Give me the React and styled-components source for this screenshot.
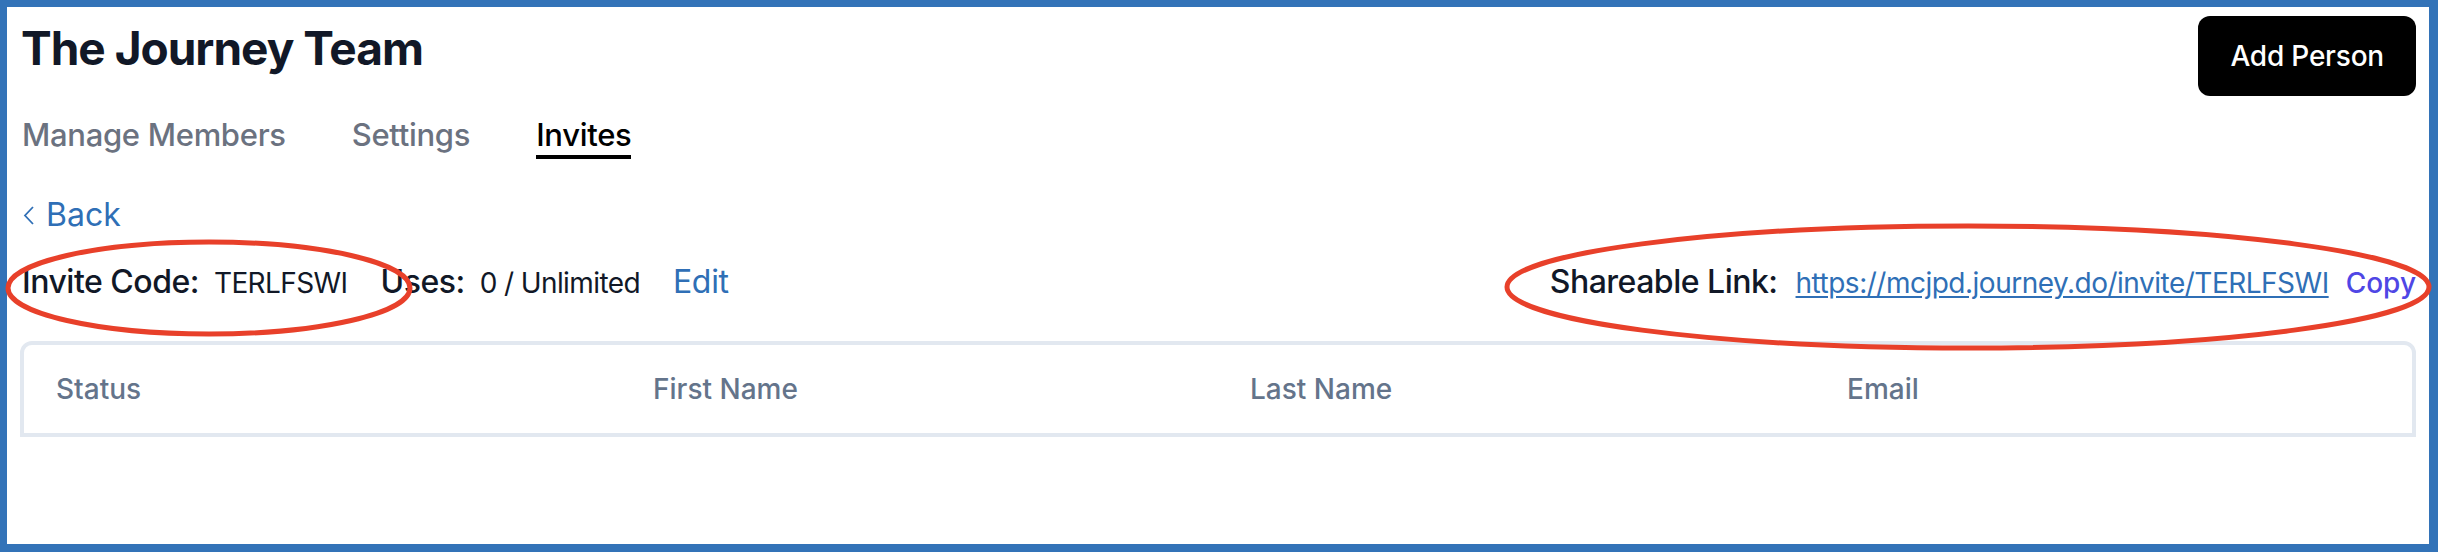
import React from "react";
import styled, { createGlobalStyle } from "styled-components";

const GlobalStyle = createGlobalStyle`
  html, body {
    margin: 0;
    padding: 0;
    background: #ffffff;
  }
  body {
    font-family: Inter, "Noto Sans", "Liberation Sans", sans-serif;
  }
`;

const Screen = styled.div`
  position: relative;
  width: 2438px;
  height: 552px;
`;

const Frame = styled.div`
  box-sizing: border-box;
  width: 100%;
  height: 100%;
  background: #ffffff;
  border-style: solid;
  border-color: #3373b8;
  border-width: 7px 9px 8px 7px;
  padding: 9px 13px 0 13px;
`;

const Header = styled.header`
  display: flex;
  justify-content: space-between;
  align-items: flex-start;
`;

const Title = styled.h1`
  margin: 0;
  padding-left: 1px;
  font-size: 46px;
  line-height: 64px;
  font-weight: 700;
  color: #111827;
  letter-spacing: -1px;
`;

const AddButton = styled.button`
  height: 80px;
  padding: 0 32px;
  border: none;
  border-radius: 12px;
  background: #000000;
  color: #ffffff;
  font-family: inherit;
  font-size: 28px;
  font-weight: 500;
  letter-spacing: -0.2px;
`;

const Tabs = styled.nav`
  display: flex;
  gap: 66px;
  margin-top: 19px;
  padding-left: 2px;
`;

const Tab = styled.span`
  font-size: 31px;
  line-height: 40px;
  font-weight: 500;
  letter-spacing: -0.3px;
  color: ${(p) => (p.$active ? "#000000" : "#6b7280")};
  border-bottom: 4px solid ${(p) => (p.$active ? "#000000" : "transparent")};
`;

const BackLink = styled.a`
  display: inline-flex;
  align-items: center;
  gap: 12px;
  margin-top: 32px;
  padding-left: 3px;
  font-size: 32px;
  line-height: 48px;
  color: #2f6fb6;
  text-decoration: none;
`;

const InviteRow = styled.div`
  display: flex;
  justify-content: space-between;
  align-items: baseline;
  margin-top: 19px;
  line-height: 48px;
`;

const Group = styled.div`
  display: flex;
  align-items: baseline;
`;

const Label = styled.span`
  font-size: 32px;
  font-weight: 500;
  letter-spacing: -0.5px;
  color: #111827;
  padding-left: ${(p) => (p.$first ? "2px" : "0")};
`;

const Value = styled.span`
  margin-left: 15px;
  margin-right: 33px;
  font-size: 28px;
  letter-spacing: -0.6px;
  color: #111827;
`;

const EditLink = styled.a`
  font-size: 32px;
  letter-spacing: -0.3px;
  color: #2f6fb6;
`;

const UrlLink = styled.a`
  margin-left: 18px;
  font-size: 28px;
  letter-spacing: -0.5px;
  color: #2f6fb6;
  text-decoration: underline;
  text-underline-offset: 3px;
`;

const CopyButton = styled.span`
  margin-left: 17px;
  font-size: 28px;
  font-weight: 500;
  color: #4f46e5;
`;

const Table = styled.div`
  display: grid;
  grid-template-columns: repeat(4, 1fr);
  margin-top: 34px;
  border: 4px solid #e2e8f0;
  border-radius: 12px 12px 0 0;
`;

const HeadCell = styled.div`
  padding: 24px 32px;
  font-size: 28px;
  line-height: 40px;
  font-weight: 500;
  color: #64748b;
`;

const Annotations = styled.svg`
  position: absolute;
  inset: 0;
  pointer-events: none;
`;

const columns = ["Status", "First Name", "Last Name", "Email"];

export default function App() {
  return (
    <Screen>
      <GlobalStyle />
      <Frame>
        <Header>
          <Title>The Journey Team</Title>
          <AddButton>Add Person</AddButton>
        </Header>
        <Tabs>
          <Tab>Manage Members</Tab>
          <Tab>Settings</Tab>
          <Tab $active>Invites</Tab>
        </Tabs>
        <BackLink>
          <svg width="11" height="19" viewBox="0 0 11 19">
            <path d="M10 1 L2 9.5 L10 18" fill="none" stroke="#2f6fb6" strokeWidth="1.8" />
          </svg>
          Back
        </BackLink>
        <InviteRow>
          <Group>
            <Label $first>Invite Code:</Label>
            <Value>TERLFSWI</Value>
            <Label>Uses:</Label>
            <Value>0 / Unlimited</Value>
            <EditLink>Edit</EditLink>
          </Group>
          <Group>
            <Label>Shareable Link:</Label>
            <UrlLink>https://mcjpd.journey.do/invite/TERLFSWI</UrlLink>
            <CopyButton>Copy</CopyButton>
          </Group>
        </InviteRow>
        <Table>
          {columns.map((c) => (
            <HeadCell key={c}>{c}</HeadCell>
          ))}
        </Table>
      </Frame>
      <Annotations width="2438" height="552" viewBox="0 0 2438 552">
        <ellipse cx="209" cy="288" rx="201" ry="46" fill="none" stroke="#e8402a" strokeWidth="5" />
        <ellipse cx="1968" cy="287" rx="461" ry="61" fill="none" stroke="#e8402a" strokeWidth="5" />
      </Annotations>
    </Screen>
  );
}
